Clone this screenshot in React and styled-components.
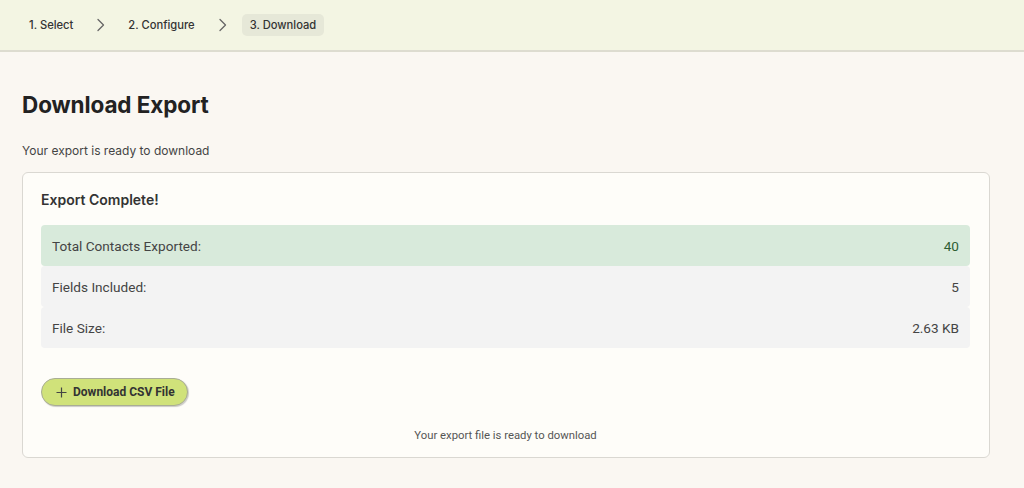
import React from 'react'
import styled, { createGlobalStyle } from 'styled-components'

const GlobalStyle = createGlobalStyle`
    html, body {
        margin: 0;
        padding: 0;
        background: #faf7f2;
    }
    body {
        font-family: Inter, "Liberation Sans", sans-serif;
        color: #222;
    }
`

const TopBar = styled.nav`
    height: 50px;
    background: #f3f5e3;
    border-bottom: 2px solid #dddcd0;
    display: flex;
    align-items: center;
    padding-left: 21px;
`

const Step = styled.span`
    font-size: 11.2px;
    font-weight: 500;
    color: #333;
    padding: 4px 8px;
    border-radius: 5px;
    background: ${p => (p.active ? '#e6e8d8' : 'transparent')};
`

const Chevron = styled.span`
    display: flex;
    align-items: center;
    padding: 0 14px 0 15px;
    color: #666;
`

const Main = styled.main`
    padding: 38px 34px 0 22px;
`

const Title = styled.h1`
    font-size: 22.5px;
    font-weight: 700;
    color: #222;
    margin: 0;
    line-height: 30px;
    letter-spacing: -0.1px;
`

const Subtitle = styled.p`
    font-size: 12px;
    color: #444;
    margin: 23px 0 13px;
    line-height: 16px;
`

const Card = styled.section`
    background: #fefdf9;
    border: 1px solid #dad8d2;
    border-radius: 6px;
    padding: 17px 19px 13px 18px;
    font-family: Roboto, "Liberation Sans", sans-serif;
`

const CardTitle = styled.h2`
    font-family: Inter, "Liberation Sans", sans-serif;
    font-size: 14px;
    font-weight: 600;
    color: #333;
    margin: 0 0 15px;
    line-height: 20px;
`

const Stats = styled.div`
    display: flex;
    flex-direction: column;
`

const StatRow = styled.div`
    height: 41px;
    display: flex;
    align-items: center;
    justify-content: space-between;
    padding: 0 11px;
    border-radius: 4px;
    font-size: 13.6px;
    background: ${p => (p.highlight ? '#d8eadb' : '#f3f3f3')};
    color: #444;
`

const StatValue = styled.span`
    color: ${p => (p.highlight ? '#2e5e34' : '#444')};
`

const ButtonRow = styled.div`
    margin-top: 30px;
`

const DownloadButton = styled.button`
    display: inline-flex;
    align-items: center;
    gap: 6px;
    height: 28px;
    padding: 0 12px 0 14px;
    border-radius: 14px;
    border: 1px solid #a9ad95;
    background: #d0e27a;
    box-shadow: 1px 1px 1px rgba(0, 0, 0, 0.2);
    font-family: Roboto, "Liberation Sans", sans-serif;
    font-size: 12px;
    font-weight: 700;
    color: #333;
    cursor: pointer;
`

const Note = styled.p`
    text-align: center;
    font-size: 11.3px;
    color: #555;
    margin: 22px 0 0;
    line-height: 16px;
`

const ChevronIcon = () => (
    <svg width="10" height="14" viewBox="0 0 10 14" fill="none">
        <path d="M2 1.5 L7.5 7 L2 12.5" stroke="#666" strokeWidth="1.3" strokeLinecap="round" strokeLinejoin="round" />
    </svg>
)

const PlusIcon = () => (
    <svg width="11" height="11" viewBox="0 0 11 11">
        <path d="M5.5 0.5 V10.5 M0.5 5.5 H10.5" stroke="#444" strokeWidth="1.2" />
    </svg>
)

function App() {
    const stats = [
        { label: 'Total Contacts Exported:', value: '40', highlight: true },
        { label: 'Fields Included:', value: '5' },
        { label: 'File Size:', value: '2.63 KB' }
    ]

    return (
        <div>
            <GlobalStyle />
            <TopBar>
                <Step>1. Select</Step>
                <Chevron><ChevronIcon /></Chevron>
                <Step>2. Configure</Step>
                <Chevron><ChevronIcon /></Chevron>
                <Step active>3. Download</Step>
            </TopBar>
            <Main>
                <Title>Download Export</Title>
                <Subtitle>Your export is ready to download</Subtitle>
                <Card>
                    <CardTitle>Export Complete!</CardTitle>
                    <Stats>
                        {stats.map(s => (
                            <StatRow key={s.label} highlight={s.highlight}>
                                <span>{s.label}</span>
                                <StatValue highlight={s.highlight}>{s.value}</StatValue>
                            </StatRow>
                        ))}
                    </Stats>
                    <ButtonRow>
                        <DownloadButton type="button">
                            <PlusIcon />
                            Download CSV File
                        </DownloadButton>
                    </ButtonRow>
                    <Note>Your export file is ready to download</Note>
                </Card>
            </Main>
        </div>
    )
}

export default App
